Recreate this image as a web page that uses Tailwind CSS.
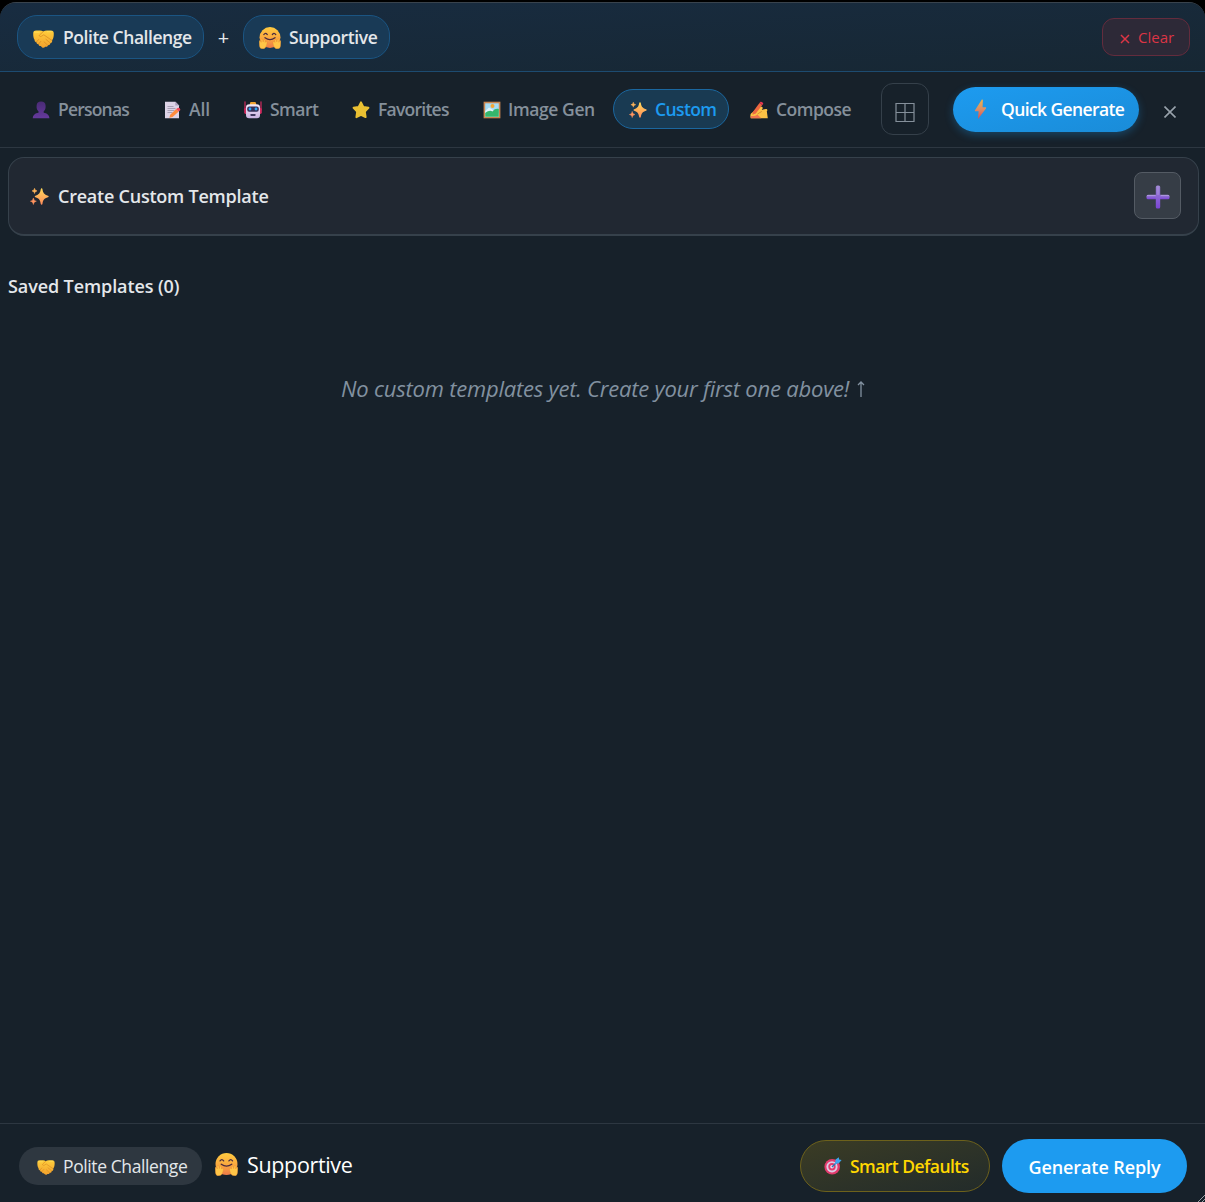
<!DOCTYPE html>
<html lang="en">
<head>
<meta charset="utf-8">
<title>Templates</title>
<script src="https://cdn.jsdelivr.net/npm/@tailwindcss/browser@4"></script>
</head>
<body class="relative bg-black">
<svg class="absolute size-0" aria-hidden="true">
  <defs>
    <linearGradient id="skin" x1="0" y1="0" x2="0" y2="1"><stop offset="0" stop-color="#ffcf3d"/><stop offset="1" stop-color="#f2a02c"/></linearGradient>
    <linearGradient id="face" x1="0" y1="0" x2="0" y2="1"><stop offset="0" stop-color="#ffcb3f"/><stop offset=".55" stop-color="#f9a640"/><stop offset="1" stop-color="#ee7a48"/></linearGradient>
    <linearGradient id="spark" x1="0" y1="0" x2="0" y2="1"><stop offset="0" stop-color="#ffd95a"/><stop offset="1" stop-color="#ff8a5b"/></linearGradient>
    <linearGradient id="bolt" x1="0" y1="0" x2="0" y2="1"><stop offset="0" stop-color="#efb34c"/><stop offset=".5" stop-color="#d98f69"/><stop offset="1" stop-color="#e04a4f"/></linearGradient>
    <linearGradient id="bot" x1="0" y1="0" x2="0" y2="1"><stop offset="0" stop-color="#f3e9fa"/><stop offset="1" stop-color="#c9b3e0"/></linearGradient>
    <linearGradient id="person" x1="0" y1="0" x2="0" y2="1"><stop offset="0" stop-color="#4a2b76"/><stop offset="1" stop-color="#653a9c"/></linearGradient>
    <linearGradient id="plus" x1="0" y1="0" x2="0" y2="1"><stop offset="0" stop-color="#9a83cf"/><stop offset="1" stop-color="#7b45d6"/></linearGradient>
  </defs>
  <symbol id="i-shake" viewBox="0 0 20 17">
    <path d="M.2 3.400C.2 1.200 1 .4 3 .4h3.600c1.200 0 2.200.3 3.200 1C10.800.7 12 .3 13.200.3h3.800c2 0 2.800.9 2.800 3 0 3-.4 4.800-1.600 6.400.3 1.600-.5 2.600-1.700 2.700-.1 1.500-1 2.200-2.200 2.100-.5 1.300-1.500 1.800-2.700 1.300-.9 1.300-2.300 1.300-3.300.2l-1-.9c-1.300.1-1.900-.6-2-1.700-1.300 0-2-.7-2-1.900-1.400-.1-2-1-1.700-2.100C.5 7.700.2 6 .2 3.400Z" fill="url(#skin)"/>
    <path d="M10 1.300 6.300 4.600c-.8 1 .3 2 1.700 1.300l2.300-1.400 7.600 5.300M16.300 12.200l-4-3.400M14 14.400l-3.500-3.200M3.300 11.300l2-2.300M5.400 13.200l2-2.400" fill="none" stroke="#d98a22" stroke-width=".7" stroke-linecap="round"/>
    <path d="M1.500 2h4.500M13.500 1.500h4" stroke="#ffdf5c" stroke-width=".8" stroke-linecap="round"/>
  </symbol>
  <symbol id="i-hug" viewBox="0 0 22 22">
    <circle cx="11" cy="10.600" r="10.500" fill="url(#face)"/>
    <path d="M4.800 7.600q1.700-2.500 3.500 0M13.300 7.600q1.800-2.500 3.500 0" fill="none" stroke="#4b2b3e" stroke-width="1.200" stroke-linecap="round"/>
    <path d="M6 10.700q5 3.800 10 0" fill="none" stroke="#4b2b3e" stroke-width="1.300" stroke-linecap="round"/>
    <g id="i-palm"><path d="M.2 14.500c-.1-1.200 1.300-1.400 1.600-.2l.4 1-.2-2.500c0-1.300 1.500-1.300 1.700-.1l.5 2.200.4-1.700c.3-1.200 1.800-.9 1.600.4l-.1 1.700c.8-1.200 2.300-.9 2 .4-.2 1.600-.8 3.900-2 5.200-1.500 1.400-4.100 1.200-5-.2C.3 19.200.3 17 .2 14.500Z" fill="#ffc547" stroke="#e88a32" stroke-width=".4"/></g>
    <use href="#i-palm" transform="matrix(-1 0 0 1 22 0)"/>
  </symbol>
  <symbol id="i-spark" viewBox="0 0 18 17">
    <path d="M11 .3c.5 0 .7.300.8.800.6 3.600 1.600 4.900 5.200 6.100.9.300.9 1.300 0 1.600-3.600 1.200-4.600 2.500-5.200 6.300-.2 1-1.400 1-1.600 0C9.600 11.300 8.600 10 5.200 8.800c-.9-.3-.9-1.300 0-1.600C8.600 6 9.600 4.700 10.200 1.100c.1-.5.3-.8.8-.8Z" fill="url(#spark)"/>
    <path d="M4.300.2c.4 1.600.8 2 2.400 2.500-1.600.5-2 .9-2.400 2.500-.4-1.600-.8-2-2.400-2.500C3.500 2.200 3.900 1.800 4.300.2Z" fill="#ffb55a" stroke="#ffb55a" stroke-width=".5"/>
    <path d="M3.200 9.400c.5 2 1 2.500 2.800 3.100-1.800.6-2.300 1.100-2.800 3.100-.5-2-1-2.500-2.800-3.100 1.800-.6 2.300-1.100 2.800-3.100Z" fill="#ff9460" stroke="#ff9460" stroke-width=".5"/>
  </symbol>
  <symbol id="i-person" viewBox="0 0 18 18">
    <path d="M.8 17.300c.1-3.500 2.500-5.200 5.700-5.600v-1.400C5 9.300 4.400 7.400 4.600 4.800 4.700 2 6.400.6 9.100.6s4.400 1.400 4.500 4.200c.2 2.600-.4 4.500-1.900 5.500v1.400c3.200.4 5.600 2.100 5.700 5.600Z" fill="url(#person)"/>
  </symbol>
  <symbol id="i-memo" viewBox="0 0 18 18">
    <path d="M2 .8h10.500L16 4.500v12.700H2Z" fill="#ddd3e6"/><path d="M12.300.8 16 4.500h-3.700Z" fill="#aa9dbb"/>
    <path d="M4.500 5.500h6M4.500 7.500h8M4.500 9.500h7M4.500 11.500h5" stroke="#9a93a8" stroke-width=".8"/>
    <path d="m7.200 13.700 6-5.600 2.500 2.400-6.100 5.400-3.200.9Z" fill="#ff8b3d"/><path d="m13.200 8.100 1.500-1.200c1.300-.6 3.100 1 2.500 2.300l-1.500 1.300Z" fill="#f2495e"/>
  </symbol>
  <symbol id="i-bot" viewBox="0 0 18 18">
    <path d="M1 .8v8M17 .8v8" stroke="#d12a5e" stroke-width="1.200" stroke-linecap="round"/>
    <rect x=".2" y="7" width="17.600" height="6" rx="1.400" fill="#d12a5e"/>
    <rect x="6" y="1" width="6" height="3.500" rx="1.200" fill="#f0a32f"/>
    <path d="M2 6.500c0-2.300 1-3.300 3.500-3.300h7c2.500 0 3.500 1 3.500 3.300V14c0 2.300-1 3.300-3 3.300H5C3 17.300 2 16.300 2 14Z" fill="url(#bot)"/>
    <rect x="3.200" y="5.500" width="11.600" height="5.200" rx="2" fill="#353057"/>
    <circle cx="6" cy="8" r="1.400" fill="#2da7f2"/><circle cx="12" cy="8" r="1.400" fill="#2da7f2"/>
    <rect x="6.500" y="13" width="5" height="2" rx=".4" fill="#40395e"/>
  </symbol>
  <symbol id="i-star" viewBox="0 0 18 18">
    <path d="M9 1.400 11.300 6l5.100.8-3.600 3.800.8 5.500L9 13.800l-4.600 2.300.8-5.500L1.600 6.800 6.700 6Z" fill="#eac032" stroke="#eac032" stroke-width="2" stroke-linejoin="round"/>
  </symbol>
  <symbol id="i-pic" viewBox="0 0 18 18">
    <rect x=".6" y=".7" width="16.800" height="16.600" fill="#c98650"/><rect x="2.200" y="2.300" width="13.600" height="13.400" fill="#a5dcf5"/>
    <circle cx="9.500" cy="5" r="2" fill="#f4a634"/><path d="M2.200 10 6 6.500l9.800 6v3.200H2.200Z" fill="#dff3fa"/>
    <path d="M2.200 12c3-2.500 5.500-3 7.300-1.500 2-2.600 4-3 6.300-2.500v7.700H2.200Z" fill="#35b76c"/>
  </symbol>
  <symbol id="i-write" viewBox="0 0 18 18">
    <path d="M1 12.500 5.500 9l4.800-3c1.600-.8 3 .3 2.100 1.900l-.6 1 4-.9c1.500-.2 2.100 1.400 1 2.200l1 7.100H4.500L.8 17.200c-.6-1.500-.6-3.500.2-4.700Z" fill="#fcc245"/>
    <path d="M.8 15c3 .2 5 0 6.500-1.500l4 3.800H.8Z" fill="#f2764f"/>
    <path d="m3 10.800 6.500-8.900 2.800 2-6.500 8.600-3.500 1.300Z" fill="#ed6740"/><path d="m9.500 1.900.8-1c.8-.9 3.400.7 2.800 2l-.8 1Z" fill="#e83552"/>
    <path d="m7.500 13 4.300-2.600" stroke="#d98b2d" stroke-width=".9"/>
  </symbol>
  <symbol id="i-target" viewBox="0 0 18 18">
    <circle cx="8.200" cy="9.800" r="7.800" fill="#e23b6d"/><circle cx="8" cy="9.800" r="5.600" fill="#dccbe5"/><circle cx="8" cy="9.800" r="3.700" fill="#e23b6d"/><circle cx="8" cy="9.800" r="1.800" fill="#eadcef"/>
    <path d="m8 10 5-5" stroke="#2779b8" stroke-width="1.400"/><path d="m11 6.500.6-4L14.800.2l.3 2.300 2.500.5-2.700 3.200-3.900.7Z" fill="#3da5ee"/>
  </symbol>
</svg>

<div class="mt-[2px] flex h-[1200px] flex-col overflow-hidden rounded-t-2xl border-t border-[#39434d] bg-[#17212a] font-['Open_Sans','Noto_Sans',sans-serif] text-[17.5px] whitespace-nowrap text-[#e4e7ea]">
  <header class="flex h-[69px] shrink-0 items-center border-b border-[#1d4b70] bg-linear-to-br from-[#182c41] to-[#172733] pr-[15px] pl-[17px]">
    <div class="flex h-11 w-[187px] items-center rounded-[20px] border border-[#1b5583] bg-[#193a56] pl-[15px] font-semibold">
      <svg class="mt-[3px] mr-[9px] h-[18px] w-[21px]"><use href="#i-shake"/></svg>
      <span class="pt-px tracking-[-0.45px]">Polite Challenge</span>
    </div>
    <span class="w-[39px] pt-[2px] text-center text-[20px] font-medium">+</span>
    <div class="flex h-11 w-[147px] items-center rounded-[20px] border border-[#1b5583] bg-[#193a56] pl-[15px] font-semibold">
      <svg class="mt-px mr-2 size-[22px]"><use href="#i-hug"/></svg>
      <span class="pt-px tracking-[-0.35px]">Supportive</span>
    </div>
    <button class="ml-auto flex h-[38px] w-[88px] items-center rounded-xl border border-[#642c3d] bg-[#2d2937] pl-[17px] text-[15px] font-medium text-[#dc3545]">
      <svg class="mt-1 mr-2 size-[10px]" viewBox="0 0 10 10"><path d="M1 1l8 8M9 1l-8 8" stroke="currentColor" stroke-width="1.500"/></svg>
      <span>Clear</span>
    </button>
  </header>

  <nav class="flex h-[76px] shrink-0 items-center border-b border-[#2d3741] pl-[17px] font-semibold text-[#85909b]">
    <div class="mb-px flex gap-[6px]">
      <div class="flex h-10 w-[125px] items-center gap-2 pt-px pl-[15px]"><svg class="size-[18px]"><use href="#i-person"/></svg><span class="tracking-[-0.8px]">Personas</span></div>
      <div class="flex h-10 w-[75px] items-center gap-2 pt-px pl-[15px]"><svg class="size-[18px]"><use href="#i-memo"/></svg><span class="tracking-[-0.1px]">All</span></div>
      <div class="flex h-10 w-[102px] items-center gap-2 pt-px pl-[15px]"><svg class="size-[18px]"><use href="#i-bot"/></svg><span class="tracking-[-0.5px]">Smart</span></div>
      <div class="flex h-10 w-[125px] items-center gap-2 pt-px pl-[15px]"><svg class="size-[18px]"><use href="#i-star"/></svg><span class="tracking-[-0.75px]">Favorites</span></div>
      <div class="flex h-10 w-[139px] items-center gap-[7px] pt-px pl-[15px]"><svg class="size-[18px]"><use href="#i-pic"/></svg><span class="tracking-[-0.4px]">Image Gen</span></div>
      <div class="flex h-10 w-[116px] items-center gap-2 rounded-[20px] border border-[#1b679f] bg-[#193a52] pt-px pl-[15px] text-[#1d9bf0]"><svg class="mt-px h-[17px] w-[18px]"><use href="#i-spark"/></svg><span class="tracking-[-0.6px]">Custom</span></div>
      <div class="flex h-10 w-[129px] items-center gap-2 pt-px pl-[15px]"><svg class="size-[18px]"><use href="#i-write"/></svg><span class="tracking-[-0.5px]">Compose</span></div>
    </div>
    <button class="mb-px ml-[17px] flex h-[52px] w-12 items-center justify-center rounded-xl border border-[#35404a]">
      <svg class="mt-[7px] size-5" viewBox="0 0 20 20"><path d="M1 .5h18v18H1zM10 .5v18M1 9.500h18" fill="none" stroke="#85909b" stroke-width="1.200"/></svg>
    </button>
    <button class="ml-6 flex h-[45px] w-[186px] items-center rounded-full bg-linear-to-br from-[#1d9bf0] to-[#1a8cd8] pl-[21px] text-white shadow-[0_3px_8px_rgba(29,155,240,0.3)]">
      <svg class="mr-[14px] h-[21px] w-[13px]" viewBox="0 0 13 21"><path d="M7.700.7 1 11.200c-.3.500 0 1 .6 1h3L4 20l8-10.600c.4-.6.100-1.200-.6-1.200H8.600l.3-7.100c0-.6-.8-1-1.200-.4Z" fill="url(#bolt)"/></svg>
      <span class="tracking-[-0.6px]">Quick Generate</span>
    </button>
    <svg class="mt-[5px] ml-[25px] size-3" viewBox="0 0 12 12"><path d="M.5.5l11 11M11.500.5l-11 11" stroke="#98a2ab" stroke-width="1.600"/></svg>
  </nav>

  <main class="flex-1 pt-[9px] pr-[6px] pl-2">
    <section class="flex h-[79px] items-center rounded-2xl border border-b-2 border-[#36414b] bg-[#212832] pr-[17px] pl-[21px] text-[18px] font-semibold">
      <svg class="mt-px mr-[9px] h-[18px] w-[19px]"><use href="#i-spark"/></svg>
      <span class="tracking-[-0.23px]">Create Custom Template</span>
      <button class="mb-px ml-auto flex size-[47px] items-center justify-center rounded-lg border border-[#545b64] bg-[#363d46]">
        <svg class="mt-[3px] size-6" viewBox="0 0 24 24"><rect x=".5" y="9.800" width="23" height="4.400" rx="1.500" fill="url(#plus)"/><rect x="9.800" y=".5" width="4.400" height="23" rx="1.500" fill="url(#plus)"/><path d="M12 1v9M1 10.500h8.500M15 10.500h8" stroke="#b09dde" stroke-width=".8"/></svg>
      </button>
    </section>
    <h3 class="mt-[37px] h-[26px] text-[18px] leading-[26px] font-semibold tracking-[-0.1px]">Saved Templates (0)</h3>
    <p class="mt-[73px] flex h-8 items-center pl-[333px] text-[22px] text-[#8291a0]"><span class="tracking-[-0.21px] italic">No custom templates yet. Create your first one above!</span>
      <svg class="mt-[2px] ml-[8px] h-[16px] w-[8px]" viewBox="0 0 8 16"><path d="M4 1v15M1 4l3-3 3 3" fill="none" stroke="currentColor" stroke-width="1.300"/></svg></p>
  </main>

  <footer class="flex h-[79px] shrink-0 items-center border-t border-[#2d3741] pr-[18px] pl-[19px]">
    <div class="mt-[5px] flex h-[38px] w-[183px] items-center rounded-[19px] bg-[#2e3740] pl-[18px]">
      <svg class="mt-[3px] mr-2 h-[15px] w-[18px]"><use href="#i-shake"/></svg>
      <span class="pt-[2px] tracking-[-0.4px]">Polite Challenge</span>
    </div>
    <div class="mt-[3px] ml-[13px] flex items-center text-[21.5px] text-white">
      <svg class="mr-[9px] size-[23px]"><use href="#i-hug"/></svg>
      <span class="pt-px tracking-[-0.35px]">Supportive</span>
    </div>
    <button class="mt-[5px] ml-auto flex h-[52px] w-[190px] items-center rounded-full border border-[#6d611b] bg-linear-to-br from-[#3b3c24] to-[#222b2a] pl-[23px] font-semibold text-[#ffd700]">
      <svg class="mt-px mr-2 size-[18px]"><use href="#i-target"/></svg>
      <span class="pt-[2px] tracking-[-0.55px]">Smart Defaults</span>
    </button>
    <button class="mt-[5px] ml-3 flex h-[54px] w-[185px] items-center justify-center rounded-full bg-[#1d9bf0] pt-[3px] text-[18px] font-semibold tracking-[-0.1px] text-white">Generate Reply</button>
  </footer>
</div>
<svg class="absolute right-0 bottom-0 size-[7px]" viewBox="0 0 7 7"><path d="M0 7 7 0M4 7l3-3" stroke="#9aa0a6" stroke-width="1"/></svg>
</body>
</html>
